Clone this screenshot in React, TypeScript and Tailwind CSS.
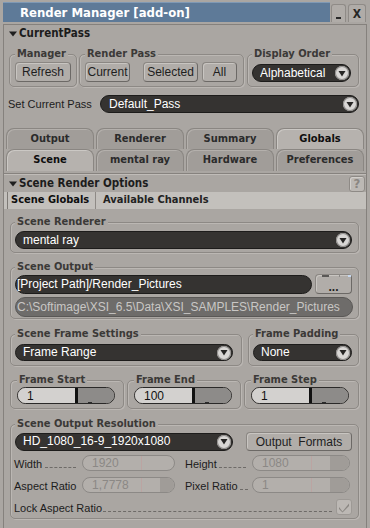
import React from "react";

const BOLD = "font-['DejaVu_Sans_Condensed','DejaVu_Sans',sans-serif] font-bold";
const BTN =
  "flex items-center justify-center rounded-[4px] border border-[#8b8783] border-b-[#6c6966] border-r-[#6c6966] bg-[#b1ada9] shadow-[inset_1px_1px_0_#c8c5c1] text-[12px] text-[#1e1e1e]";

function Arrow() {
  return (
    <div className="flex h-[14px] w-[14px] shrink-0 items-center justify-center rounded-full bg-[#d9d7d5] shadow-[inset_0_0_0_1px_#8f8d8b]">
      <svg width="8" height="7" viewBox="0 0 8 7">
        <path d="M0.5 1 H7.5 L4 6.5 Z" fill="#262524" />
      </svg>
    </div>
  );
}

function Dropdown({ text, className }: { text: string; className: string }) {
  return (
    <div
      className={`flex items-center rounded-full border border-[#1d1c1b] bg-[#353331] pl-[7px] pr-[1px] text-[12px] text-white ${className}`}
    >
      <span className="flex-1 truncate leading-[15px]">{text}</span>
      <Arrow />
    </div>
  );
}

function Group({
  label,
  className,
  children,
}: {
  label: string;
  className: string;
  children?: React.ReactNode;
}) {
  return (
    <div
      className={`rounded-[5px] border border-[#8d8985] shadow-[inset_1px_1px_0_#bbb7b3,1px_1px_0_#bbb7b3] ${className}`}
    >
      <div
        className={`-mt-[7px] w-fit bg-[#aaa6a2] px-[2px] text-[11px] leading-[12px] text-[#3b3937] ${BOLD}`}
      >
        {label}
      </div>
      {children}
    </div>
  );
}

function Tri() {
  return (
    <svg width="8" height="6" viewBox="0 0 8 6" className="shrink-0">
      <path d="M0 0.5 H8 L4 5.5 Z" fill="#1f1f1f" />
    </svg>
  );
}

function Tab({ label, active }: { label: string; active?: boolean }) {
  return (
    <div
      className={
        active
          ? `flex w-[88px] items-center justify-center rounded-t-[8px] border border-b-0 border-[#8a8682] bg-[#b6b2ae] text-[11px] text-[#0e0e0e] shadow-[inset_1px_1px_0_#cbc8c4] ${BOLD}`
          : `flex w-[88px] items-center justify-center rounded-t-[8px] border border-b-0 border-[#8a8682] bg-[#a19d99] text-[11px] text-[#2b2b2b] shadow-[inset_1px_1px_0_#b4b0ac] ${BOLD}`
      }
    >
      {label}
    </div>
  );
}

function Slider({ value }: { value: string }) {
  return (
    <div className="flex h-[17px] w-[98px] overflow-hidden rounded-full border border-[#2a2928]">
      <div className="flex w-[57px] items-center bg-[#d3d1cf] pl-[9px] text-[12px] leading-none text-[#111]">
        {value}
      </div>
      <div className="w-[3px] bg-[#111]" />
      <div className="flex flex-1 items-end bg-[#8d8b89] pl-[10px]">
        <div className="h-px w-[4px] bg-[#2a2a2a]" />
      </div>
    </div>
  );
}

function DisInput({
  value,
  w,
  split,
  dark,
}: {
  value: string;
  w: string;
  split: string;
  dark?: boolean;
}) {
  return (
    <div
      className={`flex h-[16px] shrink-0 overflow-hidden rounded-full border border-[#8c8986] bg-[#b3afab] ${w}`}
    >
      <div className={`flex items-center pl-[9px] text-[12px] leading-none text-[#8b8885] ${split}`}>
        {value}
      </div>
      <div className="w-px bg-[#bba4a2]" />
      <div className="w-[18px]" />
      <div className={dark ? "flex-1 bg-[#a09c98]" : "flex-1"} />
    </div>
  );
}

function Dashed({ className }: { className: string }) {
  return <div className={`mb-[3px] h-0 min-w-0 flex-1 border-b border-dashed border-[#6e6b68] ${className}`} />;
}

export default function App() {
  return (
    <div className="h-[528px] w-[370px] overflow-hidden bg-[#aaa6a2] font-['Liberation_Sans',Arial,sans-serif] text-[#1c1c1c]">
      {/* Title bar */}
      <div className="flex h-[22px] items-end pl-[3px]">
        <div
          className={`flex h-[20px] w-[327px] items-center border-t border-[#7f99b5] bg-[#5e7a98] pl-[17px] text-[13px] text-white ${BOLD}`}
        >
          Render Manager [add-on]
        </div>
        <div className="ml-[1px] flex h-[18px] w-[15px] items-end justify-center rounded-t-[3px] border border-[#8f8b87] border-b-0 bg-[#b0aca8] pb-[3px]">
          <div className="h-[2px] w-[5px] bg-[#2a2a2a]" />
        </div>
        <div
          className={`ml-[2px] flex h-[18px] w-[18px] items-center justify-center rounded-t-[3px] border border-[#8f8b87] border-b-0 bg-[#b0aca8] text-[12px] text-[#262626] ${BOLD}`}
        >
          X
        </div>
      </div>

      {/* Frame */}
      <div className="ml-[3px] mt-[2px] h-[504px] w-[364px] border-x border-t border-[#85817d]">
        {/* CurrentPass header */}
        <div className={`mt-[1px] flex h-[16px] items-center gap-[2px] pl-[5px] text-[11.5px] ${BOLD}`}>
          <Tri />
          <span>CurrentPass</span>
        </div>

        {/* Groups row */}
        <div className="mt-[12px] flex pl-[5px]">
          <Group label="Manager" className="w-[68px] pb-[4px] pl-[5px]">
            <div className={`mt-[2px] h-[20px] w-[56px] ${BTN}`}>Refresh</div>
          </Group>
          <Group label="Render Pass" className="ml-[2px] w-[165px] pb-[4px] pl-[5px]">
            <div className="mt-[2px] flex">
              <div className={`h-[20px] w-[45px] ${BTN}`}>Current</div>
              <div className={`ml-[13px] h-[20px] w-[55px] ${BTN}`}>Selected</div>
              <div className={`ml-[4px] h-[20px] w-[35px] ${BTN}`}>All</div>
            </div>
          </Group>
          <Group label="Display Order" className="ml-[3px] w-[112px] pb-[4px] pl-[4px]">
            <Dropdown text="Alphabetical" className="mt-[4px] h-[18px] w-[99px]" />
          </Group>
        </div>

        {/* Set current pass */}
        <div className="mt-[8px] flex h-[18px] items-center pl-[4px] pr-[7px]">
          <span className="text-[11px]">Set Current Pass</span>
          <Dropdown text="Default_Pass" className="ml-auto h-[18px] w-[259px] pl-[8px]" />
        </div>

        {/* Tabs */}
        <div className="mt-[15px] flex h-[21px] gap-[2px] pl-[2px]">
          <Tab label="Output" />
          <Tab label="Renderer" />
          <Tab label="Summary" />
          <Tab label="Globals" active />
        </div>
        <div className="flex h-[22px] gap-[2px] pl-[2px]">
          <Tab label="Scene" active />
          <Tab label="mental ray" />
          <Tab label="Hardware" />
          <Tab label="Preferences" />
        </div>
        <div className="mt-[2px] h-px bg-[#86827e]" />
        <div className="h-px bg-[#c0bcb8]" />

        {/* Scene Render Options header */}
        <div className={`flex h-[17px] items-center gap-[2px] pl-[5px] pr-[1px] text-[11.5px] ${BOLD}`}>
          <Tri />
          <span>Scene Render Options</span>
          <div className="ml-auto flex h-[16px] w-[16px] items-center justify-center rounded-[3px] border border-[#8e8a86] bg-[#bcb8b4] text-[13px] text-[#8a8682] shadow-[inset_1px_1px_0_#d2cfcb]">
            ?
          </div>
        </div>

        {/* Sub strip */}
        <div className={`flex h-[17px] items-stretch bg-[#c3c0bc] text-[11px] ${BOLD}`}>
          <div className="ml-[3px] flex w-[89px] items-center border-x border-l-[#7e7a76] border-r-[#8e8a86] pl-[3px] text-[#0e0e0e]">
            Scene Globals
          </div>
          <div className="ml-[7px] flex items-center text-[#222]">Available Channels</div>
        </div>

        {/* Scene Renderer */}
        <Group label="Scene Renderer" className="ml-[6px] mt-[13px] w-[349px] pb-[3px] pl-[4px]">
          <Dropdown text="mental ray" className="mt-[3px] h-[18px] w-[337px]" />
        </Group>

        {/* Scene Output */}
        <Group label="Scene Output" className="ml-[6px] mt-[14px] w-[349px] pb-[1px] pl-[4px]">
          <div className="mt-[1px] flex h-[20px]">
            <div className="mt-[1px] flex h-[19px] w-[297px] items-center rounded-full border border-[#1d1c1b] bg-[#353331] pl-[1px] text-[12px] leading-[15px] text-white">
              [Project Path]/Render_Pictures
            </div>
            <div className={`ml-[3px] h-[20px] w-[37px] flex-col !justify-start ${BTN}`}>
              <div className="flex h-[2px] w-full items-start">
                <div className="ml-[6px] h-[2px] w-[8px] bg-[#5a5856]" />
                <div className="ml-[10px] h-[2px] w-px bg-[#8a8886]" />
                <div className="ml-[8px] h-[2px] w-[3px] bg-[#c6d8f0]" />
              </div>
              <div className="mt-[4px] text-[12px] font-bold leading-none">...</div>
            </div>
          </div>
          <div className="mt-[3px] flex h-[20px] w-[338px] items-center rounded-full border border-[#5a5856] bg-[#6e6c6a] pl-[1px] text-[12px] leading-[15px] text-[#c9c7c5]">
            C:\Softimage\XSI_6.5\Data\XSI_SAMPLES\Render_Pictures
          </div>
        </Group>

        {/* Frame settings */}
        <div className="ml-[6px] mt-[15px] flex">
          <Group label="Scene Frame Settings" className="w-[232px] pb-[4px] pl-[4px]">
            <Dropdown text="Frame Range" className="mt-[4px] h-[17px] w-[218px]" />
          </Group>
          <Group label="Frame Padding" className="ml-[6px] w-[111px] pb-[4px] pl-[4px]">
            <Dropdown text="None" className="mt-[4px] h-[17px] w-[99px]" />
          </Group>
        </div>

        {/* Frame start/end/step */}
        <div className="ml-[6px] mt-[14px] flex">
          <Group label="Frame Start" className="w-[114px] pb-[4px] pl-[6px]">
            <div className="mt-[1px]">
              <Slider value="1" />
            </div>
          </Group>
          <Group label="Frame End" className="ml-[3px] w-[114px] pb-[4px] pl-[6px]">
            <div className="mt-[1px]">
              <Slider value="100" />
            </div>
          </Group>
          <Group label="Frame Step" className="ml-[3px] w-[115px] pb-[4px] pl-[6px]">
            <div className="mt-[1px]">
              <Slider value="1" />
            </div>
          </Group>
        </div>

        {/* Scene Output Resolution */}
        <Group label="Scene Output Resolution" className="ml-[6px] mt-[15px] w-[349px] pb-[3px] pl-[4px]">
          <div className="mt-[2px] flex h-[19px] items-center">
            <Dropdown text="HD_1080_16-9_1920x1080" className="h-[18px] w-[218px]" />
            <div className={`ml-[13px] h-[19px] w-[106px] ${BTN}`}>Output&nbsp; Formats</div>
          </div>
          <div className="-ml-[1px] mt-[4px] flex h-[16px] text-[11px]">
            <div className="flex w-[68px] shrink-0 items-end">
              <span className="whitespace-nowrap leading-[14px]">Width</span>
              <Dashed className="ml-[3px] mr-[6px]" />
            </div>
            <DisInput value="1920" w="w-[93px]" split="w-[58px]" />
            <div className="ml-[10px] flex w-[67px] shrink-0 items-end">
              <span className="whitespace-nowrap leading-[14px]">Height</span>
              <Dashed className="ml-[2px] mr-[6px]" />
            </div>
            <DisInput value="1080" w="w-[98px]" split="w-[58px]" dark />
          </div>
          <div className="-ml-[1px] mt-[6px] flex h-[16px] text-[11px]">
            <div className="flex w-[68px] shrink-0 items-end">
              <span className="whitespace-nowrap leading-[14px]">Aspect Ratio</span>
            </div>
            <DisInput value="1,7778" w="w-[93px]" split="w-[58px]" dark />
            <div className="ml-[10px] flex w-[67px] shrink-0 items-end">
              <span className="whitespace-nowrap leading-[14px]">Pixel Ratio</span>
              <Dashed className="ml-[2px] mr-[4px]" />
            </div>
            <DisInput value="1" w="w-[98px]" split="w-[58px]" dark />
          </div>
          <div className="-ml-[1px] mt-[6px] flex h-[16px] items-end pr-[6px] text-[11px]">
            <span className="whitespace-nowrap leading-[14px]">Lock Aspect Ratio</span>
            <Dashed className="ml-[1px] mr-[4px]" />
            <div className="flex h-[16px] w-[16px] items-center justify-center rounded-[3px] border border-[#9d9995] bg-[#bcb8b4]">
              <svg width="12" height="11" viewBox="0 0 12 11">
                <path d="M1 5 L4.5 9.5 L11 1.5 L11 4 L4.5 10.5 L1 7 Z" fill="#8a8682" />
              </svg>
            </div>
          </div>
        </Group>
      </div>
    </div>
  );
}
